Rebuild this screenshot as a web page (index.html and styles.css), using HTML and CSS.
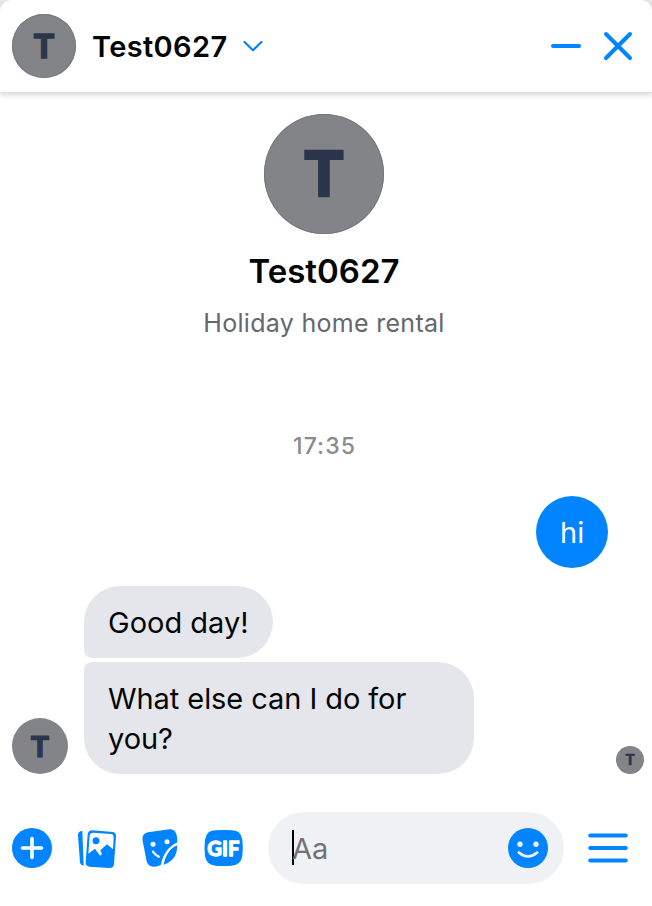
FILE: index.html
```html
<!DOCTYPE html>
<html lang="en">
<head>
<meta charset="utf-8">
<title>Test0627</title>
<link rel="stylesheet" href="styles.css">
</head>
<body>
<main class="chat">
  <header class="header">
    <span class="avatar avatar-md">T</span>
    <h1 class="header-name">Test0627</h1>
    <svg class="chevron" viewBox="0 0 20 12"><path d="M1.500 2 10 10.200 18.500 2"/></svg>
    <div class="window-actions">
      <svg class="minimize" viewBox="0 0 32 32"><path d="M3 16H29"/></svg>
      <svg class="close" viewBox="0 0 32 32"><path d="M4 4 28 28M28 4 4 28"/></svg>
    </div>
  </header>

  <section class="profile">
    <span class="avatar avatar-lg">T</span>
    <h2 class="profile-name">Test0627</h2>
    <p class="profile-category">Holiday home rental</p>
  </section>

  <section class="messages">
    <time class="timestamp">17:35</time>
    <div class="bubble sent">hi</div>
    <div class="incoming">
      <span class="avatar avatar-sm">T</span>
      <div class="stack">
        <div class="bubble received first">Good day!</div>
        <div class="bubble received last">What else can I do for<br>you?</div>
      </div>
      <span class="avatar avatar-xs">T</span>
    </div>
  </section>

  <footer class="composer">
    <svg class="icon-plus" viewBox="0 0 40 40"><circle cx="20" cy="20" r="20" fill="#0084ff"/><path d="M10.500 20H29.500M20 10.500V29.500" stroke="#fff" stroke-width="3.600" stroke-linecap="round"/></svg>
    <svg class="icon-gallery" viewBox="231 39 120 120">
      <path d="M247 48Q233 48 234 62L240 142Q242 152 251 152Z" fill="#0084ff"/>
      <path d="M277 46 338 51Q349 53 348 64L342 148Q341 159 329 159L268 155Q256 153 257 142L263 58Q265 46 277 46Z" fill="#0084ff"/>
      <path d="M280 53 332 57Q342 58 341 68L339 103 321 88 301 106 306 117 300 122 285 101 265 116 269 62Q270 53 280 53Z" fill="#fff"/>
      <circle cx="288" cy="77" r="10.500" fill="#0084ff"/>
    </svg>
    <svg class="icon-sticker" viewBox="36 42 108 114">
      <path d="M54 52 118 43Q133 42 138 55Q144 72 141 83Q126 88 112 105Q97 124 93 149Q84 155 72 155Q55 156 50 139L38 78Q34 56 54 52Z" fill="#0084ff"/>
      <path d="M142 91Q122 99 111 119Q103 134 101 149Q124 142 135 123Q142 110 142 91Z" fill="#0084ff"/>
      <circle cx="69" cy="88" r="7.500" fill="#fff"/><circle cx="111" cy="80" r="7.500" fill="#fff"/>
      <path d="M69 110Q75 120 86 125" fill="none" stroke="#fff" stroke-width="7" stroke-linecap="round"/>
    </svg>
    <svg class="icon-gif" viewBox="222 42 120 114">
      <path d="M257 46Q281 44 305 46Q333 46 337 74Q340 98 337 123Q333 150 305 152Q281 154 257 152Q229 150 225 123Q222 98 225 74Q229 46 257 46Z" fill="#0084ff"/>
      <text class="gif-label" x="280" y="122" textLength="96" lengthAdjust="spacingAndGlyphs" text-anchor="middle">GIF</text>
    </svg>
    <div class="input">
      <span class="caret"></span><span class="placeholder">Aa</span>
      <svg class="icon-smile" viewBox="0 0 40 40"><circle cx="20" cy="20" r="20" fill="#0084ff"/><circle cx="12" cy="16.300" r="2.700" fill="#f0f1f5"/><circle cx="28" cy="16.300" r="2.700" fill="#f0f1f5"/><path d="M10.800 24.500Q20 32.500 29.200 24.500" fill="none" stroke="#f0f1f5" stroke-width="2.600" stroke-linecap="round"/></svg>
    </div>
    <svg class="icon-menu" viewBox="0 0 40 40"><path d="M2.200 7.500H37.800M2.200 20H37.800M2.200 32.500H37.800"/></svg>
  </footer>
</main>
</body>
</html>
```

FILE: styles.css
```css
* { box-sizing: border-box; }
body {
  margin: 0;
  background: #e4e5e8;
  font-family: Inter, "Liberation Sans", sans-serif;
  color: #050505;
}
svg { display: block; flex: none; }
h1, h2, p { margin: 0; font-weight: 600; }
.chat {
  display: flex;
  flex-direction: column;
  height: 906px;
  overflow: hidden;
  border-radius: 12px 12px 0 0;
  background: #fff;
}
.header {
  display: flex;
  flex: none;
  align-items: center;
  height: 92px;
  padding: 0 18px 0 12px;
  box-shadow: 0 1px 0 #dedede, 0 2px 7px rgba(0, 0, 0, .2);
}
.avatar {
  display: flex;
  flex: none;
  align-items: center;
  justify-content: center;
  border-radius: 50%;
  background: #838488;
  box-shadow: inset 0 0 0 1px #78797c;
  color: #2c364b;
  font-weight: 700;
  line-height: 1;
  -webkit-text-stroke: .04em #2c364b;
}
.avatar-lg { width: 120px; height: 120px; font-size: 62px; }
.avatar-md { width: 64px; height: 64px; font-size: 33px; }
.avatar-sm { width: 56px; height: 56px; font-size: 29px; box-shadow: none; }
.avatar-xs { width: 28px; height: 28px; font-size: 14.500px; box-shadow: none; margin: 0 8px 0 auto; }
.header-name { margin-left: 16px; width: 135px; padding-top: 1px; font-size: 29px; line-height: 36px; letter-spacing: .35px; white-space: nowrap; }
.chevron {
  width: 20px; height: 12px; margin-left: 16px;
  fill: none; stroke: #0084ff; stroke-width: 2.2; stroke-linecap: round; stroke-linejoin: round;
}
.window-actions { display: flex; gap: 20px; margin-left: auto; }
.window-actions svg { width: 32px; height: 32px; fill: none; stroke: #0084ff; stroke-width: 4; stroke-linecap: round; }
.profile { display: flex; flex: none; flex-direction: column; align-items: center; padding: 22px 4px 0 0; }
.profile-name { margin-top: 17px; font-size: 33px; line-height: 40px; }
.profile-category { margin-top: 16px; color: #65676b; font-size: 25px; font-weight: 400; line-height: 32px; letter-spacing: .3px; }
.messages { display: flex; flex: none; flex-direction: column; padding: 92px 0 0 12px; }
.timestamp { align-self: center; margin-right: 15px; color: #8a8b8e; font-size: 23px; font-weight: 450; line-height: 30px; letter-spacing: 1.1px; }
.bubble { font-size: 29px; line-height: 40px; padding: 17px 24px 15px; border-radius: 36px; white-space: nowrap; }
.sent { align-self: flex-end; width: 72px; height: 72px; margin: 35px 44px 0 0; background: #0084ff; color: #fff; }
.incoming { display: flex; align-items: flex-end; margin-top: 18px; }
.stack { display: flex; flex-direction: column; align-items: flex-start; gap: 4px; margin-left: 16px; }
.received { background: #e4e6eb; }
.first { width: 189px; border-bottom-left-radius: 8px; }
.last { width: 390px; border-top-left-radius: 8px; letter-spacing: -.07px; }
.composer { display: flex; align-items: center; height: 72px; margin-top: 38px; padding-left: 12px; }
.icon-plus { width: 40px; height: 40px; }
.icon-gallery { width: 40px; height: 40px; margin: 0 25px; }
.icon-sticker { width: 36px; height: 38px; }
.icon-gif { width: 40px; height: 38px; margin: 0 24px 0 26px; }
.gif-label { fill: #fff; stroke: #fff; stroke-width: 4; stroke-linejoin: round; font-family: Lato, Inter, sans-serif; font-size: 64px; font-weight: 700; }
.input { display: flex; align-items: center; width: 296px; height: 72px; padding: 0 16px 0 24px; border-radius: 36px; background: #f0f1f5; }
.caret { width: 2px; height: 35px; margin-bottom: 1px; background: #000; }
.placeholder { margin-left: -2px; padding-top: 2px; color: #717276; font-size: 29px; line-height: 40px; }
.icon-smile { width: 40px; height: 40px; margin-left: auto; }
.icon-menu { width: 40px; height: 40px; margin-left: 24px; fill: none; stroke: #0084ff; stroke-width: 4; stroke-linecap: round; }
```
